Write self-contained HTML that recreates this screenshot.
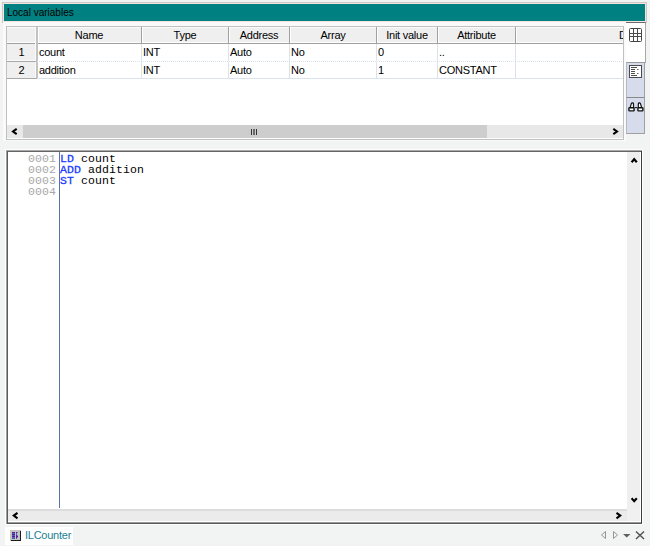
<!DOCTYPE html>
<html><head><meta charset="utf-8">
<style>
html,body{margin:0;padding:0;}
body{width:650px;height:546px;background:#f2f3f3;position:relative;overflow:hidden;font-family:"Liberation Sans",sans-serif;font-size:11px;color:#000;}
.a{position:absolute;}
.t{position:absolute;white-space:nowrap;line-height:12px;}
#title{left:3px;top:3px;width:641px;height:17px;border:1px solid #f4e4e0;background:#008080;outline:1px solid #c8c8c8;}
#frame{left:6px;top:26px;width:616px;height:112px;border:1px solid #c0c0c0;background:#fff;overflow:hidden;}
#frame .t{letter-spacing:-0.25px;}
.hd{position:absolute;top:0;height:16px;background:#efefef;border-bottom:1px solid #a0a0a0;}
.vl{position:absolute;width:1px;background:#a0a0a0;}
.bl{position:absolute;width:1px;background:#dae2ee;}
.code{font-family:"Liberation Mono",monospace;font-size:11.5px;letter-spacing:0.1px;line-height:11px;position:absolute;white-space:pre;}
.kw{color:#1a3cff;-webkit-text-stroke:0.3px #1a3cff;}
</style></head><body>
<div id="title" class="a"><div class="t" style="left:3px;top:3px;font-size:10px;">Local variables</div></div>

<div class="a" style="left:3px;top:22px;width:623px;height:119px;background:#fafafa;"></div>
<div id="frame" class="a">
  <!-- header -->
  <div class="hd" style="left:0;width:616px;"></div>
  <div class="a" style="left:0;top:0;width:616px;height:1px;background:#fbfbfb;"></div>
  <div class="a" style="left:0;top:15px;width:616px;height:1px;background:#fdfdfd;"></div>
  <div class="a" style="left:28px;top:0;width:1px;height:51px;background:#fafafa;"></div>
  <div class="vl" style="left:29px;top:0;height:52px;width:2px;background:#c2c2c2;"></div>
  <div class="vl" style="left:134px;top:0;height:16px;"></div>
  <div class="vl" style="left:221px;top:0;height:16px;"></div>
  <div class="vl" style="left:282px;top:0;height:16px;"></div>
  <div class="vl" style="left:369px;top:0;height:16px;"></div>
  <div class="vl" style="left:430px;top:0;height:16px;"></div>
  <div class="vl" style="left:508px;top:0;height:16px;"></div>
  <div class="a" style="left:31px;top:0;width:1px;height:16px;background:#fff;"></div>
  <div class="a" style="left:135px;top:0;width:1px;height:16px;background:#fff;"></div>
  <div class="a" style="left:222px;top:0;width:1px;height:16px;background:#fff;"></div>
  <div class="a" style="left:283px;top:0;width:1px;height:16px;background:#fff;"></div>
  <div class="a" style="left:370px;top:0;width:1px;height:16px;background:#fff;"></div>
  <div class="a" style="left:431px;top:0;width:1px;height:16px;background:#fff;"></div>
  <div class="a" style="left:509px;top:0;width:1px;height:16px;background:#fff;"></div>
  <div class="t" style="left:30px;width:104px;text-align:center;top:2px;">Name</div>
  <div class="t" style="left:135px;width:86px;text-align:center;top:2px;">Type</div>
  <div class="t" style="left:222px;width:60px;text-align:center;top:2px;">Address</div>
  <div class="t" style="left:283px;width:86px;text-align:center;top:2px;">Array</div>
  <div class="t" style="left:370px;width:60px;text-align:center;top:2px;">Init value</div>
  <div class="t" style="left:431px;width:77px;text-align:center;top:2px;">Attribute</div>
  <div class="t" style="left:612px;top:2px;">D</div>
  <!-- row header col -->
  <div class="a" style="left:0;top:17px;width:28px;height:34px;background:#efefef;"></div>
  <div class="a" style="left:0;top:33px;width:28px;height:1px;background:#fafafa;"></div>
  <div class="a" style="left:0;top:34px;width:29px;height:1px;background:#a8a8a8;"></div>
  <div class="a" style="left:0;top:51px;width:31px;height:1px;background:#a8a8a8;"></div>
  <div class="t" style="left:0;width:29px;text-align:center;top:19px;">1</div>
  <div class="t" style="left:0;width:29px;text-align:center;top:37px;">2</div>
  <!-- body lines -->
  <div class="bl" style="left:134px;top:17px;height:34px;"></div>
  <div class="bl" style="left:221px;top:17px;height:34px;"></div>
  <div class="bl" style="left:282px;top:17px;height:34px;"></div>
  <div class="bl" style="left:369px;top:17px;height:34px;"></div>
  <div class="bl" style="left:430px;top:17px;height:34px;"></div>
  <div class="bl" style="left:508px;top:17px;height:34px;"></div>
  <div class="a" style="left:30px;top:34px;width:586px;height:1px;background:repeating-linear-gradient(90deg,#d8e0ec 0 1px,#fff 1px 2px);"></div>
  <div class="a" style="left:30px;top:51px;width:586px;height:1px;background:#dae2ee;"></div>
  <!-- cells -->
  <div class="t" style="left:32px;top:19px;">count</div>
  <div class="t" style="left:136px;top:19px;">INT</div>
  <div class="t" style="left:223px;top:19px;">Auto</div>
  <div class="t" style="left:284px;top:19px;">No</div>
  <div class="t" style="left:371px;top:19px;">0</div>
  <div class="t" style="left:432px;top:19px;">..</div>
  <div class="t" style="left:32px;top:37px;">addition</div>
  <div class="t" style="left:136px;top:37px;">INT</div>
  <div class="t" style="left:223px;top:37px;">Auto</div>
  <div class="t" style="left:284px;top:37px;">No</div>
  <div class="t" style="left:371px;top:37px;">1</div>
  <div class="t" style="left:432px;top:37px;">CONSTANT</div>
  <!-- h scrollbar -->
  <div class="a" style="left:0;top:98px;width:616px;height:13px;background:#e8e8e8;"></div>
  <div class="a" style="left:16px;top:98px;width:464px;height:13px;background:#cdcdcd;"></div>
  <svg class="a" style="left:4px;top:100px;" width="9" height="9"><path d="M5.7 1.8 L2 4.5 L5.7 7.2" fill="none" stroke="#000" stroke-width="2.1"/></svg>
  <svg class="a" style="left:604px;top:100px;" width="9" height="9"><path d="M2.3 1.8 L6 4.5 L2.3 7.2" fill="none" stroke="#000" stroke-width="2.1"/></svg>
  <div class="a" style="left:244px;top:102px;width:1px;height:6px;background:#333;"></div><div class="a" style="left:246px;top:102px;width:2px;height:6px;background:#6a6a6a;"></div><div class="a" style="left:249px;top:102px;width:1px;height:6px;background:#333;"></div>
</div>

<!-- side tabs -->
<div class="a" style="left:626px;top:22px;width:19px;height:40px;background:#fff;border-top:1px solid #6a6a6a;border-right:1px solid #a8a8a8;"></div>
<svg class="a" style="left:629px;top:28px;" width="14" height="14"><rect x="0.5" y="0.5" width="12" height="13" rx="1" fill="#fff" stroke="#444" stroke-width="1"/><path d="M4.5 0.5V13.5M8.5 0.5V13.5M0.5 5.5H12.5M0.5 8.5H12.5" stroke="#4a4a4a" stroke-width="1"/></svg>
<div class="a" style="left:626px;top:62px;width:17px;height:34px;background:#d6dcec;border-top:1px solid #9a9a9a;border-left:1px solid #b4b8c4;border-right:1px solid #a0a0a0;"></div>
<div class="a" style="left:626px;top:97px;width:17px;height:35px;background:#d6dcec;border-top:1px solid #8a8a8a;border-left:1px solid #b4b8c4;border-right:1px solid #a0a0a0;border-bottom:1px solid #a0a0a0;"></div>
<svg class="a" style="left:629px;top:65px;" width="14" height="14"><rect x="0.5" y="0.5" width="12" height="12" fill="#fff" stroke="#4a4a4a" stroke-width="1"/><path d="M2 2.5H8M2 4.5H6M2 6.5H6M2 8.5H6M2 10.5H8" stroke="#3a3a3a" stroke-width="0.9"/><path d="M8 4.5H9.5M8 8.5H9.5" stroke="#666" stroke-width="1"/></svg>
<svg class="a" style="left:628px;top:102px;" width="16" height="10"><path d="M2.2 5.6 L3.3 1.7 Q3.7 0.9 4.5 0.9 Q5.4 0.9 5.5 1.8 V5.6" fill="#fff" stroke="#111" stroke-width="1.2"/><path d="M13.6 5.6 L12.5 1.7 Q12.1 0.9 11.3 0.9 Q10.4 0.9 10.3 1.8 V5.6" fill="#fff" stroke="#111" stroke-width="1.2"/><rect x="0.9" y="5.7" width="5.2" height="3.2" rx="0.7" fill="#fff" stroke="#111" stroke-width="1.4"/><rect x="9.9" y="5.7" width="5" height="3.2" rx="0.7" fill="#fff" stroke="#111" stroke-width="1.4"/><path d="M6.6 5.6H9.4" stroke="#111" stroke-width="1"/></svg>

<!-- editor -->
<div class="a" style="left:5px;top:149px;width:638px;height:376px;background:#fff;"></div>
<div class="a" style="left:6px;top:150px;width:636px;height:1px;background:#a8a8a8;"></div>
<div class="a" style="left:6px;top:150px;width:1px;height:374px;background:#a0a0a0;"></div>
<div class="a" style="left:7px;top:151px;width:635px;height:1px;background:#666;"></div>
<div class="a" style="left:7px;top:151px;width:1px;height:373px;background:#5a5a5a;"></div>
<div class="a" style="left:641px;top:151px;width:1px;height:373px;background:#3c3c3c;"></div>
<div class="a" style="left:7px;top:523px;width:635px;height:1px;background:#585858;"></div>
<div class="a" style="left:8px;top:522px;width:633px;height:1px;background:#9a9a9a;"></div>
<div class="a" style="left:59px;top:152px;width:1px;height:356px;background:#5a70a8;"></div>
<div class="code" style="left:28px;top:152.5px;color:#a8a8a8;">0001
0002
0003
0004</div>
<div class="code" style="left:60px;top:152.5px;"><span class="kw">LD</span> count
<span class="kw">ADD</span> addition
<span class="kw">ST</span> count</div>
<!-- v scroll -->
<div class="a" style="left:627px;top:152px;width:13px;height:357px;background:#efefef;"></div>
<svg class="a" style="left:630px;top:155px;" width="9" height="9"><path d="M1.6 7.2 L4.2 4.2 L6.8 7.2" fill="none" stroke="#000" stroke-width="2.1"/></svg>
<svg class="a" style="left:630px;top:495px;" width="9" height="9"><path d="M1.6 3.2 L4.2 6.2 L6.8 3.2" fill="none" stroke="#000" stroke-width="2.1"/></svg>
<!-- h scroll -->
<div class="a" style="left:8px;top:509px;width:619px;height:2px;background:#dcdcdc;"></div>
<div class="a" style="left:8px;top:511px;width:619px;height:10px;background:#ebebeb;"></div>
<div class="a" style="left:627px;top:509px;width:13px;height:12px;background:#f0f0f0;"></div>
<svg class="a" style="left:11px;top:511px;" width="9" height="9"><path d="M6.5 1.9 L2.8 4.6 L6.5 7.3" fill="none" stroke="#000" stroke-width="2.1"/></svg>
<svg class="a" style="left:614px;top:511px;" width="9" height="9"><path d="M2.5 1.9 L6.2 4.6 L2.5 7.3" fill="none" stroke="#000" stroke-width="2.1"/></svg>

<!-- bottom tab -->
<div class="a" style="left:5px;top:527px;width:68px;height:18px;background:#fff;"></div>
<svg class="a" style="left:10px;top:530px;" width="11" height="11"><rect x="0" y="0" width="11" height="11" fill="#c4c4c4"/><path d="M10.5 1V11M1 10.5H11" stroke="#1a1a1a" stroke-width="1"/><rect x="2" y="2" width="3" height="7" fill="#4a64b0"/><rect x="6" y="2" width="1" height="7" fill="#4a64b0"/><path d="M2 2.5H5M2 4.5H5M2 6.5H5" stroke="#5a1a9a" stroke-width="1"/><rect x="6" y="2" width="1.5" height="1" fill="#5a1a9a"/><rect x="6" y="5.5" width="2" height="2" fill="#5a1a9a"/></svg>
<div class="t" style="left:25px;top:529px;color:#1a7f95;letter-spacing:-0.25px;">ILCounter</div>
<svg class="a" style="left:598px;top:529px;" width="50" height="12"><path d="M7.5 2.5 L3.5 6 L7.5 9.5 Z" fill="none" stroke="#959595" stroke-width="1"/><path d="M15.5 2.5 L19.5 6 L15.5 9.5 Z" fill="none" stroke="#959595" stroke-width="1"/><path d="M25 5 H32.5 L28.75 8.5 Z" fill="#606060"/><path d="M38 2.5 L46 10 M46 2.5 L38 10" stroke="#505050" stroke-width="1.4"/></svg>
</body></html>
